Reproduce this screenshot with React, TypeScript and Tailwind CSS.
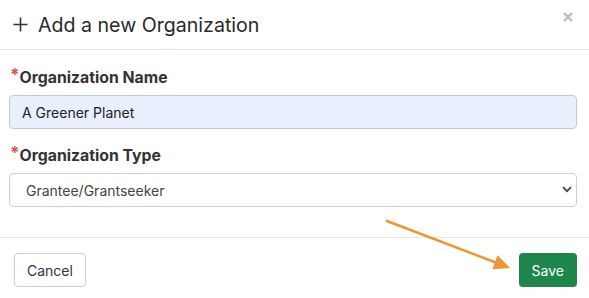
export default function App() {
  return (
    <div className="relative w-[589px] h-[298px] bg-white font-['Inter',sans-serif] text-[#333]">
      <div className="flex h-[50px] items-center justify-between border-b border-[#e5e5e5] pl-[13px] pr-[16px]">
        <div className="flex items-center gap-[10px]">
          <svg width="15" height="15" viewBox="0 0 15 15" className="text-[#333]">
            <path d="M7.5 0.5v14M0.5 7.5h14" stroke="currentColor" strokeWidth="1.6" />
          </svg>
          <h2 className="text-[19.6px] leading-[24px] text-[#2a2a2a]">Add a new Organization</h2>
        </div>
        <button className="mb-[16px] text-[#bdbdbd]">
          <svg width="10" height="10" viewBox="0 0 10 10">
            <path d="M1 1l8 8M9 1l-8 8" stroke="currentColor" strokeWidth="2.4" />
          </svg>
        </button>
      </div>

      <div className="px-[9px] pt-[17px] pb-[30px] pr-[12px]">
        <label className="mb-[6px] flex items-start pl-[1px] text-[15.8px] leading-[22px] font-bold text-[#333]">
          <span className="text-[#d9534f] text-[17px] leading-[17px]">*</span>
          Organization Name
        </label>
        <input
          className="h-[34px] w-full rounded-[4px] border border-[#c5cad0] bg-[#e8f0fe] px-[12px] text-[14px] text-[#222] outline-none"
          defaultValue="A Greener Planet"
        />

        <label className="mt-[16px] mb-[6px] flex items-start pl-[1px] text-[15.8px] leading-[22px] font-bold text-[#333]">
          <span className="text-[#d9534f] text-[17px] leading-[17px]">*</span>
          Organization Type
        </label>
        <div className="relative">
          <select className="h-[34px] w-full appearance-none rounded-[4px] border border-[#ccd0d5] bg-white pl-[16px] text-[14px] text-[#444] outline-none">
            <option>Grantee/Grantseeker</option>
          </select>
          <svg className="pointer-events-none absolute right-[5px] top-[13px] text-[#444]" width="10" height="7" viewBox="0 0 10 7">
            <path d="M1 1.2l4 4 4-4" fill="none" stroke="currentColor" strokeWidth="1.8" />
          </svg>
        </div>
      </div>

      <div className="flex items-center justify-between border-t border-[#e5e5e5] pt-[15px] pl-[14px] pr-[12px]">
        <button className="h-[34px] rounded-[4px] border border-[#cfcfcf] bg-white px-[12px] text-[14px] text-[#2d3340]">
          Cancel
        </button>
        <button className="h-[34px] rounded-[4px] bg-[#1f864b] px-[13px] text-[14px] text-white">
          Save
        </button>
      </div>

      <svg className="pointer-events-none absolute left-0 top-0" width="589" height="298">
        <line x1="387" y1="221" x2="497" y2="263" stroke="#f0962e" strokeWidth="2.5" strokeLinecap="round" />
        <polygon points="510,268 497.6,255.3 492.4,269.2" fill="#f0962e" />
      </svg>
    </div>
  )
}
